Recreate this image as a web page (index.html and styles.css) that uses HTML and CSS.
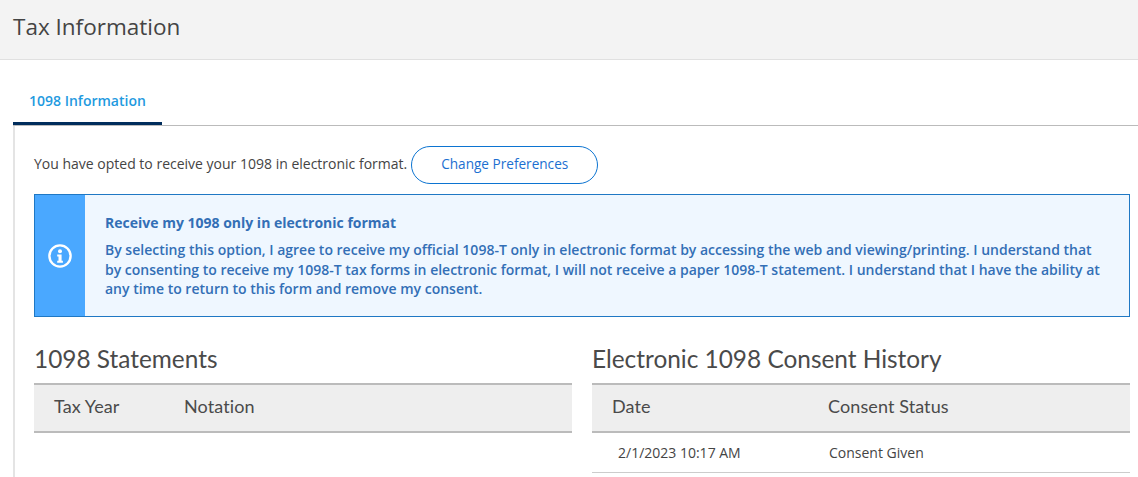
FILE: index.html
```html
<!DOCTYPE html>
<html lang="en">
<head>
  <meta charset="UTF-8" />
  <title>Tax Information</title>
  <link rel="stylesheet" href="styles.css">
</head>
<body>
  <header class="page-header">
    <h1>Tax Information</h1>
  </header>

  <main class="page-body">
    <div class="tabs">
      <a class="tab active" href="#">1098 Information</a>
    </div>

    <section class="tab-panel">
      <div class="preference-row">
        <span class="preference-text">You have opted to receive your 1098 in electronic format.</span>
        <button class="pill-button" type="button">Change Preferences</button>
      </div>

      <div class="notice">
        <div class="notice-icon">
          <svg width="24" height="24" viewBox="0 0 24 24" aria-hidden="true">
            <circle cx="12" cy="12" r="10.6" fill="none" stroke="#fff" stroke-width="2.4" />
            <circle cx="12" cy="7.2" r="2" fill="#fff" />
            <path d="M9.2 10.6h4.4v6.2h1.3v1.9H9.2v-1.9h1.3v-4.3H9.2z" fill="#fff" />
          </svg>
        </div>
        <div class="notice-text">
          <h2>Receive my 1098 only in electronic format</h2>
          <p>By selecting this option, I agree to receive my official 1098-T only in electronic format by accessing the web and viewing/printing. I understand that by consenting to receive my 1098-T tax forms in electronic format, I will not receive a paper 1098-T statement. I understand that I have the ability at any time to return to this form and remove my consent.</p>
        </div>
      </div>

      <div class="tables">
        <div class="table-block">
          <h3>1098 Statements</h3>
          <div class="table-head">
            <span class="col-year">Tax Year</span>
            <span>Notation</span>
          </div>
        </div>
        <div class="table-block">
          <h3>Electronic 1098 Consent History</h3>
          <div class="table-head">
            <span class="col-date">Date</span>
            <span>Consent Status</span>
          </div>
          <div class="table-row">
            <span class="col-date">2/1/2023 10:17 AM</span>
            <span>Consent Given</span>
          </div>
        </div>
      </div>
    </section>
  </main>
</body>
</html>
```

FILE: styles.css
```css
html, body {
  height: 100%;
  overflow: hidden;
}
body {
  margin: 0;
  background: #fff;
  color: #444;
  font-family: 'Open Sans', sans-serif;
  font-size: 14px;
}
.page-header {
  height: 59px;
  background: #f3f3f3;
  border-bottom: 1px solid #e0e0e0;
  padding-left: 13px;
}
h1 {
  margin: 0;
  font-size: 22.5px;
  font-weight: 400;
  line-height: 53px;
  color: #444;
}
.page-body {
  padding-left: 13px;
}
.tabs {
  height: 65px;
  display: flex;
  align-items: flex-end;
  border-bottom: 1px solid #bbb;
}
.tab {
  width: 149px;
  height: 42px;
  box-sizing: border-box;
  padding: 8px 0 0 16px;
  border-bottom: 3px solid #002d5c;
  color: #1f9ae0;
  font-weight: 600;
  font-size: 14px;
  text-decoration: none;
}
.tab-panel {
  box-sizing: border-box;
  height: 351px;
  border-left: 2px solid #e4e4e4;
  padding: 20px 8px 0 19px;
}
.preference-row {
  display: flex;
  align-items: center;
  gap: 4px;
}
.preference-text {
  padding-bottom: 3px;
}
.pill-button {
  width: 187px;
  height: 38px;
  padding: 0 0 4px;
  background: #fff;
  border: 1px solid #0c74d1;
  border-radius: 19px;
  color: #1c6fd1;
  font-family: 'Open Sans', sans-serif;
  font-size: 13.6px;
  font-weight: 500;
}
.notice {
  display: flex;
  margin-top: 10px;
  height: 123px;
  box-sizing: border-box;
  border: 1px solid #1f78c4;
  background: #eff7ff;
}
.notice-icon {
  width: 50px;
  flex-shrink: 0;
  background: #4aa8ff;
  display: flex;
  align-items: center;
  justify-content: center;
}
.notice-text {
  padding: 18px 20px 0;
  color: #336fb6;
  font-weight: 600;
  line-height: 19.5px;
}
.notice-text h2 {
  margin: 0 0 8px;
  font-size: 14px;
  font-weight: 700;
  line-height: 19px;
}
.notice-text p {
  margin: 0;
}
.tables {
  display: grid;
  grid-template-columns: 538px 538px;
  column-gap: 20px;
  margin-top: 27px;
}
h3 {
  margin: 0 0 9px;
  font-family: Lato, sans-serif;
  font-size: 24.4px;
  font-weight: 400;
  line-height: 30px;
  color: #4a4a4a;
}
.table-head {
  display: flex;
  align-items: center;
  height: 50px;
  box-sizing: border-box;
  background: #eee;
  border-top: 2px solid #bbb;
  border-bottom: 2px solid #bbb;
  padding: 0 0 5px 20px;
  font-family: Lato, sans-serif;
  font-size: 18px;
  letter-spacing: 0.1px;
  color: #4a4a4a;
}
.col-year {
  width: 130px;
}
.col-date {
  width: 216px;
}
.table-row {
  display: flex;
  align-items: center;
  height: 39px;
  padding-left: 26px;
  border-bottom: 1px solid #ccc;
  font-size: 14px;
}
.table-row .col-date {
  width: 211px;
}
```
